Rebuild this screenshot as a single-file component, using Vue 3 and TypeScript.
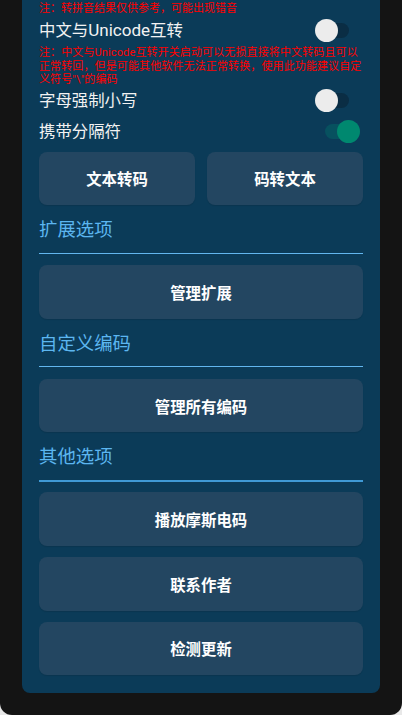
<script setup lang="ts">
const single = ['播放摩斯电码', '联系作者', '检测更新']
</script>

<template>
  <div class="screen">
    <div class="panel">
      <p class="note first">注：转拼音结果仅供参考，可能出现错音</p>
      <div class="row top"><span class="label">中文与<span class="latin">Unicode</span>互转</span><span class="sw"><i class="track"></i><i class="knob"></i></span></div>
      <p class="note body">注：中文与Unicode互转开关启动可以无损直接将中文转码且可以正常转回，但是可能其他软件无法正常转换，使用此功能建议自定义符号"\"的编码</p>
      <div class="row"><span class="label">字母强制小写</span><span class="sw"><i class="track"></i><i class="knob"></i></span></div>
      <div class="row gap"><span class="label">携带分隔符</span><span class="sw on"><i class="track"></i><i class="knob"></i></span></div>
      <div class="pair">
        <button class="btn">文本转码</button>
        <button class="btn">码转文本</button>
      </div>
      <h2 class="head">扩展选项</h2>
      <button class="btn">管理扩展</button>
      <h2 class="head">自定义编码</h2>
      <button class="btn">管理所有编码</button>
      <h2 class="head thick">其他选项</h2>
      <div class="stack">
        <button v-for="t in single" :key="t" class="btn">{{ t }}</button>
      </div>
    </div>
  </div>
</template>

<style>
html, body { margin: 0; background: #e8e8e8; }
</style>

<style scoped>
.screen {
  width: 402px;
  height: 715px;
  box-sizing: border-box;
  overflow: hidden;
  background: #141414;
  border-radius: 0 0 12px 12px;
  padding: 0 22px;
  font-family: Roboto, "Noto Sans CJK SC", sans-serif;
}
.panel {
  height: 693px;
  box-sizing: border-box;
  background: #0b3b58;
  border-radius: 0 0 8px 8px;
  padding: 0 17px;
}
.note {
  margin: 0;
  color: #f00;
  font-size: 11px;
  line-height: 13.5px;
}
.note.first { padding-top: 2px; height: 14px; box-sizing: border-box; }
.note.body { margin: 2px 0 0; letter-spacing: 0.12px; }
.latin { font-size: 1.04em; }
.row {
  height: 28px;
  display: flex;
  align-items: center;
  justify-content: space-between;
  color: #f2f2f2;
  font-size: 16.4px;
}
.label { padding-bottom: 3px; }
.row.top { margin-top: 2px; }
.row.gap { margin-top: 3px; }
.sw {
  position: relative;
  width: 24px;
  height: 15px;
  margin-right: 14px;
}
.track {
  position: absolute;
  inset: 0;
  border-radius: 8px;
  background: #0a2d44;
}
.knob {
  position: absolute;
  top: -4px;
  left: -10px;
  width: 23px;
  height: 23px;
  border-radius: 50%;
  background: #ececec;
}
.on .track { background: #07515f; }
.on .knob { left: 12px; background: #00886f; }
.pair {
  display: grid;
  grid-template-columns: 1fr 1fr;
  gap: 12px;
  margin-top: 6px;
}
.btn {
  display: block;
  width: 100%;
  height: 53.5px;
  padding: 0;
  border: 0;
  border-radius: 8px;
  background: #234661;
  box-shadow: 0 1px 1px rgba(0, 0, 0, 0.1);
  color: #fff;
  font-family: inherit;
  font-size: 15.4px;
  font-weight: 700;
}
.head {
  margin: 0 0 11.55px;
  height: 48.6px;
  box-sizing: border-box;
  border-bottom: 1px solid #62b6ee;
  color: #5cb6f0;
  font-size: 18.4px;
  font-weight: 400;
  line-height: 49px;
}
.head.thick {
  height: 49.4px;
  margin-bottom: 10.75px;
  border-bottom: 2px solid #3f9ad6;
}
.stack {
  display: flex;
  flex-direction: column;
  gap: 11.15px;
}
</style>
